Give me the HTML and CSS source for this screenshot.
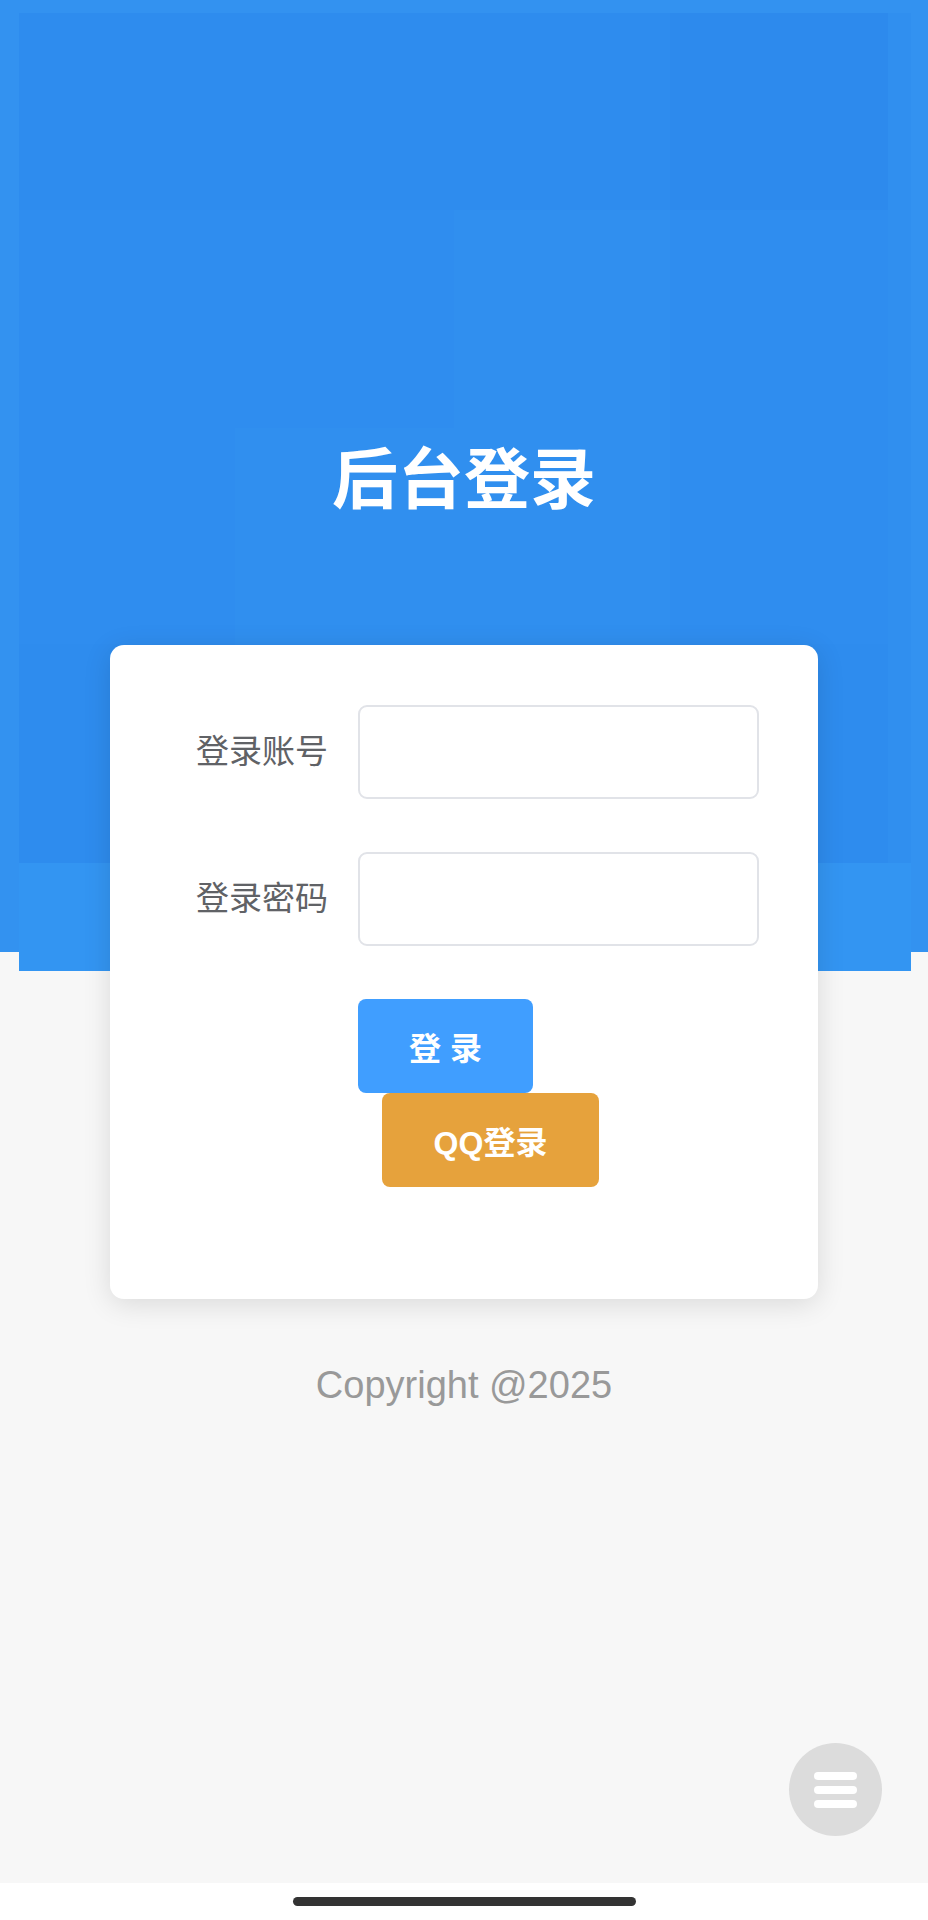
FILE: index.html
```html
<!DOCTYPE html>
<html lang="zh-CN">
  <head>
    <meta charset="UTF-8" />
    <meta name="viewport" content="width=device-width, initial-scale=1.0" />
    <title>后台登录</title>
    <link rel="stylesheet" href="styles.css">
  </head>
  <body>
    <div class="page">
      <!-- fundo azul com quadrados -->
      <div class="banner">
        <div class="tiles">
          <div class="tile s2"></div>
          <div class="tile s2"></div>
          <div class="tile s2"></div>
          <div class="tile s1"></div>
          <div class="tile s4"></div>

          <div class="tile s3"></div>
          <div class="tile s3"></div>
          <div class="tile s4"></div>
          <div class="tile s3"></div>
          <div class="tile s4"></div>

          <div class="tile s3"></div>
          <div class="tile s4"></div>
          <div class="tile s4"></div>
          <div class="tile s3"></div>
          <div class="tile s4"></div>

          <div class="tile s2"></div>
          <div class="tile s3"></div>
          <div class="tile s3"></div>
          <div class="tile s2"></div>
          <div class="tile s4"></div>

          <div class="tile s5"></div>
          <div class="tile s5"></div>
          <div class="tile s5"></div>
          <div class="tile s5"></div>
          <div class="tile s5"></div>
        </div>
      </div>

      <main class="login">
        <h1 class="titulo">后台登录</h1>

        <div class="card">
          <form class="login-form" id="formulario">
            <div class="form-item">
              <label class="form-label" for="usuario">登录账号</label>
              <div class="form-content">
                <input class="campo" type="text" id="usuario" />
              </div>
            </div>
            <div class="form-item">
              <label class="form-label" for="senha">登录密码</label>
              <div class="form-content">
                <input class="campo" type="password" id="senha" />
              </div>
            </div>
            <div class="form-item">
              <div class="form-label"></div>
              <div class="form-content botoes">
                <button type="submit" class="btn btn-primary">登 录</button>
                <button type="button" class="btn btn-warning">QQ登录</button>
              </div>
            </div>
          </form>
        </div>

        <p class="copyright">Copyright @2025</p>
      </main>

      <button class="fab" type="button" aria-label="menu">
        <span></span>
        <span></span>
        <span></span>
      </button>
    </div>

    <div class="home-area">
      <div class="home-bar"></div>
    </div>
  </body>
</html>
```

FILE: styles.css
```css
body {
  margin: 0;
  font-family: "Liberation Sans", "Noto Sans CJK SC", sans-serif;
  background-color: #fff;
}

.page {
  position: relative;
  min-height: 1883px;
  background-color: #f7f7f7;
  overflow: hidden;
}

/* Banner */
.banner {
  position: absolute;
  left: 0;
  top: 0;
  width: 100%;
  height: 952px;
  background-color: #3392f0;
}

.tiles {
  position: absolute;
  left: 19px;
  top: 13px;
  width: 892px;
  display: grid;
  grid-template-columns: 216px 219px 216px 218px 23px;
  grid-template-rows: 197px 218px 216px 219px 108px;
}

.tile.s1 { background-color: #2d8aed; }
.tile.s2 { background-color: #2e8cee; }
.tile.s3 { background-color: #2f8def; }
.tile.s4 { background-color: #308fef; }
.tile.s5 { background-color: #3395f2; }

/* Conteudo */
.login {
  position: relative;
  padding-top: 447px;
}

.titulo {
  margin: 0;
  color: #fff;
  font-size: 66px;
  line-height: 66px;
  font-weight: 700;
  text-align: center;
}

.card {
  width: 708px;
  box-sizing: border-box;
  margin: 132px auto 0;
  padding: 60px 59px 59px 60px;
  background-color: #fff;
  border-radius: 14px;
  box-shadow: 0 5px 28px rgba(0, 0, 0, 0.12);
}

.form-item {
  display: flex;
  margin-bottom: 53px;
}

.form-label {
  width: 188px;
  flex-shrink: 0;
  box-sizing: border-box;
  padding-right: 30px;
  text-align: right;
  font-size: 33px;
  line-height: 94px;
  color: #606266;
}

.form-content {
  width: 401px;
}

.campo {
  display: block;
  width: 100%;
  height: 94px;
  box-sizing: border-box;
  border: 2px solid #e1e3e8;
  border-radius: 9px;
  background: #fff;
  padding: 0 30px;
  font-size: 33px;
  outline: none;
}

.botoes {
  display: flex;
  flex-wrap: wrap;
}

.btn {
  height: 94px;
  border: none;
  border-radius: 8px;
  color: #fff;
  font-family: inherit;
  font-size: 32px;
  font-weight: 600;
  cursor: pointer;
}

.btn-primary {
  width: 175px;
  background-color: #409eff;
}

.btn-warning {
  width: 217px;
  margin-left: 24px;
  background-color: #e6a23c;
}

.copyright {
  margin: 64px 0 0;
  text-align: center;
  font-size: 38px;
  line-height: 44px;
  color: #999;
}

/* Botao flutuante */
.fab {
  position: absolute;
  right: 46px;
  top: 1743px;
  width: 93px;
  height: 93px;
  border: none;
  border-radius: 50%;
  background-color: #dcdcdc;
  display: flex;
  flex-direction: column;
  align-items: center;
  justify-content: center;
  gap: 6px;
  padding: 0;
}

.fab span {
  display: block;
  width: 43px;
  height: 8px;
  border-radius: 4px;
  background-color: #fff;
}

/* Barra inferior */
.home-area {
  height: 37px;
  display: flex;
  justify-content: center;
  padding-top: 14px;
  box-sizing: border-box;
}

.home-bar {
  width: 343px;
  height: 9px;
  border-radius: 5px;
  background-color: #333;
}
```
